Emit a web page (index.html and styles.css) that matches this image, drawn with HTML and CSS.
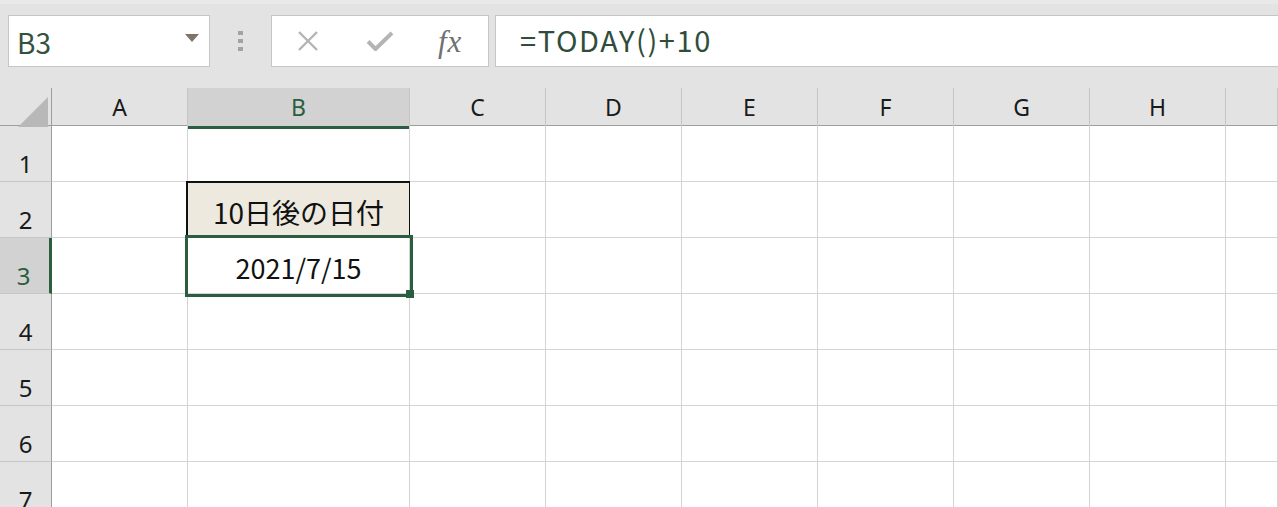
FILE: index.html
```html
<!DOCTYPE html>
<html lang="ja">
<head>
    <meta charset="UTF-8">
    <title>Book1 - Excel</title>
    <link rel="stylesheet" href="styles.css">
</head>
<body>
    <div class="toolbar">
        <div class="name-box">
            <span>B3</span>
            <svg class="drop" width="14" height="8" viewBox="0 0 14 8"><path d="M0 0h14L7 8z"/></svg>
        </div>
        <div class="grip"><i></i><i></i><i></i></div>
        <div class="fx-buttons">
            <svg class="icon" width="22" height="20" viewBox="0 0 22 20">
                <path d="M2 1l18 18M20 1L2 19" stroke="#b4b4b4" stroke-width="2.4" fill="none"/>
            </svg>
            <svg class="icon" width="26" height="20" viewBox="0 0 26 20">
                <path d="M1 10.5l7.5 7.5L25 2" stroke="#b4b4b4" stroke-width="4" fill="none"/>
            </svg>
            <span class="fx">fx</span>
        </div>
        <div class="formula">=TODAY()+10</div>
    </div>

    <div class="sheet">
        <div class="row head">
            <div class="corner"><span></span></div>
            <div class="col">A</div>
            <div class="col active">B</div>
            <div class="col">C</div>
            <div class="col">D</div>
            <div class="col">E</div>
            <div class="col">F</div>
            <div class="col">G</div>
            <div class="col">H</div>
            <div class="col"></div>
        </div>
        <div class="row">
            <div class="num">1</div>
            <div class="cell"></div><div class="cell"></div><div class="cell"></div><div class="cell"></div><div class="cell"></div><div class="cell"></div><div class="cell"></div><div class="cell"></div><div class="cell"></div>
        </div>
        <div class="row">
            <div class="num">2</div>
            <div class="cell"></div>
            <div class="cell title">10日後の日付</div>
            <div class="cell"></div><div class="cell"></div><div class="cell"></div><div class="cell"></div><div class="cell"></div><div class="cell"></div><div class="cell"></div>
        </div>
        <div class="row">
            <div class="num active">3</div>
            <div class="cell"></div>
            <div class="cell value">2021/7/15</div>
            <div class="cell"></div><div class="cell"></div><div class="cell"></div><div class="cell"></div><div class="cell"></div><div class="cell"></div><div class="cell"></div>
        </div>
        <div class="row">
            <div class="num">4</div>
            <div class="cell"></div><div class="cell"></div><div class="cell"></div><div class="cell"></div><div class="cell"></div><div class="cell"></div><div class="cell"></div><div class="cell"></div><div class="cell"></div>
        </div>
        <div class="row">
            <div class="num">5</div>
            <div class="cell"></div><div class="cell"></div><div class="cell"></div><div class="cell"></div><div class="cell"></div><div class="cell"></div><div class="cell"></div><div class="cell"></div><div class="cell"></div>
        </div>
        <div class="row">
            <div class="num">6</div>
            <div class="cell"></div><div class="cell"></div><div class="cell"></div><div class="cell"></div><div class="cell"></div><div class="cell"></div><div class="cell"></div><div class="cell"></div><div class="cell"></div>
        </div>
        <div class="row">
            <div class="num">7</div>
            <div class="cell"></div><div class="cell"></div><div class="cell"></div><div class="cell"></div><div class="cell"></div><div class="cell"></div><div class="cell"></div><div class="cell"></div><div class="cell"></div>
        </div>

        <!-- active cell outline with fill handle -->
        <div class="selection"><span class="handle"></span></div>
    </div>
</body>
</html>
```

FILE: styles.css
```css
* {
    margin: 0;
    padding: 0;
    box-sizing: border-box;
}

body {
    width: 1278px;
    height: 507px;
    overflow: hidden;
    background: #e3e3e3;
    font-family: 'Noto Sans', 'Noto Sans CJK JP', sans-serif;
    color: #1a1a1a;
}

/* formula bar */
.toolbar {
    height: 88px;
    display: flex;
    align-items: flex-start;
    padding: 11px 0 0 8px;
    border-top: 4px solid #e9e9e9;
}

.name-box {
    width: 202px;
    height: 52px;
    background: white;
    border: 1px solid #c6c6c6;
    display: flex;
    align-items: center;
    justify-content: space-between;
    padding: 0 10px 0 8px;
}

.name-box span {
    font-family: 'Noto Sans CJK JP', sans-serif;
    font-size: 28px;
    color: #34513e;
    line-height: 1;
    padding-top: 2px;
}

.drop {
    fill: #7f7468;
    margin-bottom: 6px;
}

.grip {
    width: 61px;
    height: 52px;
    display: flex;
    flex-direction: column;
    align-items: center;
    justify-content: center;
    gap: 4px;
}

.grip i {
    display: block;
    width: 5px;
    height: 4px;
    background: #a3a3a3;
}

.fx-buttons {
    width: 218px;
    height: 52px;
    background: white;
    border: 1px solid #c6c6c6;
    display: flex;
    align-items: center;
    padding-left: 25px;
}

.fx-buttons .icon {
    margin-right: 48px;
}

.fx-buttons .icon + .icon {
    margin-right: 45px;
}

.fx {
    font-family: 'Liberation Serif', serif;
    font-style: italic;
    font-size: 31px;
    color: #707070;
    line-height: 1;
    letter-spacing: 1px;
}

.formula {
    flex: 1;
    margin-left: 6px;
    height: 52px;
    background: white;
    border: 1px solid #c6c6c6;
    border-right: none;
    padding: 3px 0 0 24px;
    font-family: 'Noto Sans CJK JP', sans-serif;
    font-size: 29px;
    letter-spacing: 1.6px;
    line-height: 1.4;
    color: #2f4d3a;
}

/* grid */
.sheet {
    position: relative;
    background: white;
}

.row {
    display: grid;
    grid-template-columns: 52px 136px 222px repeat(6, 136px) 1fr;
    height: 56px;
}

.row.head {
    height: 38px;
    background: #e3e3e3;
    border-bottom: 1px solid #9e9e9e;
}

.corner {
    position: relative;
    border-right: 1px solid #9e9e9e;
}

.corner span {
    position: absolute;
    right: 3px;
    bottom: 2px;
    width: 30px;
    height: 30px;
    background: #b8b8b8;
    clip-path: polygon(100% 0, 100% 100%, 0 100%);
}

.col {
    border-right: 1px solid #c6c6c6;
    text-align: center;
    font-size: 23px;
    line-height: 38px;
}

.col.active {
    background: #d2d2d2;
    color: #2b5e40;
    border-bottom: 3px solid #2b5e40;
    line-height: 38px;
}

.num {
    background: #e3e3e3;
    border-right: 1px solid #9e9e9e;
    border-bottom: 1px solid #c6c6c6;
    display: flex;
    align-items: flex-end;
    justify-content: center;
    font-size: 24px;
    line-height: 1;
    padding-bottom: 5px;
}

.num.active {
    background: #d2d2d2;
    color: #2b5e40;
    border-right: 3px solid #2b5e40;
    padding-right: 2px;
}

.cell {
    border-right: 1px solid #d4d4d4;
    border-bottom: 1px solid #d4d4d4;
}

.title,
.value {
    display: flex;
    align-items: flex-end;
    justify-content: center;
    font-family: 'Noto Sans CJK JP', sans-serif;
    line-height: 1;
    color: #111;
}

.title {
    font-size: 28px;
    padding-bottom: 11px;
    background: #ede9df;
    border: 1px solid #111;
    border-top-width: 2px;
    border-left-width: 2px;
    margin-left: -2px;
    margin-top: -1px;
}

.value {
    font-size: 27px;
    padding-bottom: 12px;
}

.selection {
    position: absolute;
    left: 185px;
    top: 147px;
    width: 228px;
    height: 62px;
    border: 3px solid #2b5e40;
}

.handle {
    position: absolute;
    right: -4px;
    bottom: -4px;
    width: 8px;
    height: 8px;
    background: #2b5e40;
}
```
